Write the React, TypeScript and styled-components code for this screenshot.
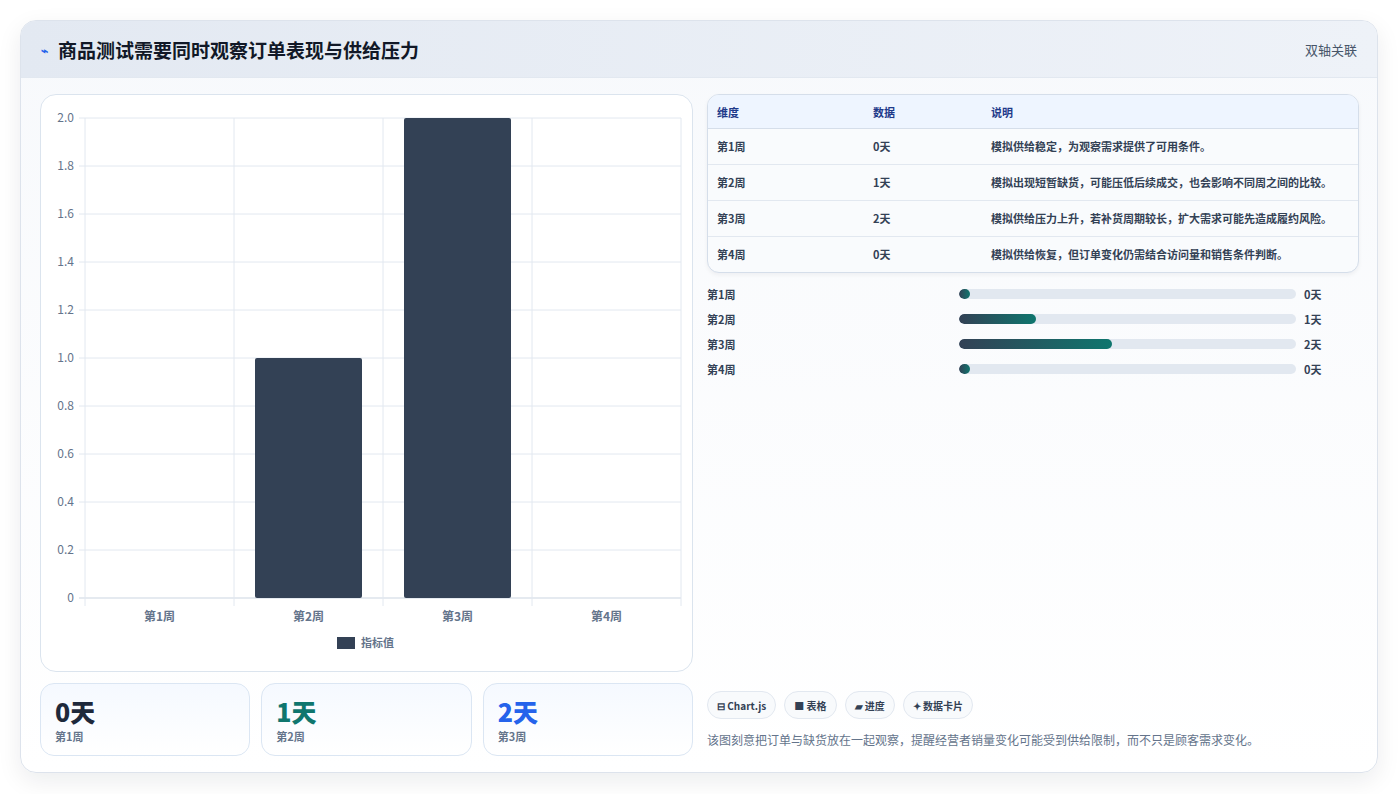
import styled, { createGlobalStyle } from "styled-components";

const GlobalStyle = createGlobalStyle`
  html, body { margin: 0; padding: 0; background: #ffffff; }
  body { font-family: "Noto Sans CJK SC", "Noto Sans", sans-serif; color: #1e293b; }
`;

const weeks = [
  { name: "第1周", value: 0, note: "模拟供给稳定，为观察需求提供了可用条件。" },
  { name: "第2周", value: 1, note: "模拟出现短暂缺货，可能压低后续成交，也会影响不同周之间的比较。" },
  { name: "第3周", value: 2, note: "模拟供给压力上升，若补货周期较长，扩大需求可能先造成履约风险。" },
  { name: "第4周", value: 0, note: "模拟供给恢复，但订单变化仍需结合访问量和销售条件判断。" },
];

const Page = styled.div`
  padding: 20px 21px 21px 20px;
`;

const Card = styled.div`
  height: 753px;
  box-sizing: border-box;
  border: 1px solid #dde3ec;
  border-radius: 16px;
  background: linear-gradient(180deg, #f7f9fc 0%, #ffffff 100%);
  box-shadow: 0 8px 24px rgba(15, 23, 42, 0.08);
  overflow: hidden;
  display: flex;
  flex-direction: column;
`;

const Header = styled.div`
  height: 56px;
  flex: none;
  display: flex;
  align-items: center;
  justify-content: space-between;
  padding: 0 20px;
  background: linear-gradient(90deg, #e3e9f2 0%, #eef2f8 100%);
  border-bottom: 1px solid #e2e8f0;
`;

const Title = styled.h2`
  margin: 0;
  font-size: 19px;
  font-weight: 700;
  color: #111827;
  display: flex;
  align-items: center;
  gap: 10px;
`;

const Mark = styled.span`
  color: #2563eb;
  font-size: 12px;
`;

const Tag = styled.span`
  font-size: 13px;
  color: #475569;
`;

const Body = styled.div`
  flex: 1;
  display: grid;
  grid-template-columns: 653px 1fr;
  gap: 14px;
  padding: 16px 18px 18px 19px;
`;

const Left = styled.div`
  display: flex;
  flex-direction: column;
  gap: 11px;
`;

const ChartBox = styled.div`
  height: 578px;
  box-sizing: border-box;
  border: 1px solid #dbe4ee;
  border-radius: 16px;
  background: #fff;
`;

const Stats = styled.div`
  display: grid;
  grid-template-columns: repeat(3, 1fr);
  gap: 11px;
`;

const Stat = styled.div`
  height: 73px;
  box-sizing: border-box;
  border: 1px solid #dbe6f3;
  border-radius: 14px;
  background: linear-gradient(180deg, #f5f9ff 0%, #ffffff 100%);
  padding: 10px 14px;
`;

const StatValue = styled.div<{ $c: string }>`
  font-size: 25px;
  font-weight: 800;
  line-height: 34px;
  color: ${(p) => p.$c};
`;

const StatLabel = styled.div`
  font-size: 11px;
  font-weight: 700;
  color: #64748b;
`;

const Right = styled.div`
  display: flex;
  flex-direction: column;
`;

const Table = styled.table`
  width: 100%;
  border-collapse: separate;
  border-spacing: 0;
  border: 1px solid #d5deea;
  border-radius: 12px;
  overflow: hidden;
  font-size: 11px;
  font-weight: 700;
  color: #334155;
  background: #f9fbfd;
  box-shadow: 0 2px 4px rgba(15, 23, 42, 0.05);
  th {
    text-align: left;
    background: #eef5ff;
    color: #1e3a8a;
    height: 33px;
    padding: 0 9px;
    border-bottom: 1px solid #d5deea;
  }
  td {
    padding: 9px 9px;
    line-height: 17px;
    vertical-align: top;
    border-bottom: 1px solid #e2e8f0;
  }
  tr:last-child td { border-bottom: none; }
`;

const Bars = styled.div`
  display: flex;
  flex-direction: column;
  gap: 7px;
  margin-top: 12px;
  font-size: 11px;
  font-weight: 700;
  color: #334155;
`;

const BarRow = styled.div`
  display: grid;
  grid-template-columns: 244px 337px 1fr;
  gap: 8px;
  align-items: center;
  height: 18px;
`;

const Track = styled.div`
  height: 10px;
  border-radius: 5px;
  background: #e2e8f0;
  overflow: hidden;
`;

const Fill = styled.div`
  height: 100%;
  min-width: 11px;
  border-radius: 5px;
  background: linear-gradient(90deg, #334155 0%, #0f766e 100%);
`;

const Spacer = styled.div`
  flex: 1;
`;

const Chips = styled.div`
  display: flex;
  gap: 8px;
  margin-bottom: 12px;
`;

const Chip = styled.span`
  height: 28px;
  box-sizing: border-box;
  padding: 0 9px;
  display: flex;
  align-items: center;
  gap: 4px;
  border: 1px solid #e2e8f0;
  border-radius: 14px;
  background: #f8fafc;
  font-size: 10px;
  font-weight: 700;
  color: #334155;
`;

const Caption = styled.p`
  margin: 0 0 8px;
  font-size: 12px;
  color: #64748b;
`;

function Chart() {
  const x0 = 44, x1 = 640, y0 = 23, y1 = 503;
  const ticks = [0, 0.2, 0.4, 0.6, 0.8, 1.0, 1.2, 1.4, 1.6, 1.8, 2.0];
  const cw = (x1 - x0) / 4;
  const y = (v: number) => y1 - (v / 2) * (y1 - y0);
  return (
    <svg width="651" height="576" style={{ display: "block" }} fontFamily='"Noto Sans CJK SC", sans-serif'>
      {ticks.map((t) => (
        <g key={t}>
          <line x1={x0 - 6} x2={x1} y1={y(t)} y2={y(t)} stroke={t === 0 ? "#cbd5e1" : "#e2e8f0"} />
          <text x={x0 - 11} y={y(t) + 4} textAnchor="end" fontSize="12" fill="#64748b">
            {t === 0 ? "0" : t.toFixed(1)}
          </text>
        </g>
      ))}
      {[0, 1, 2, 3, 4].map((i) => (
        <line key={i} x1={x0 + i * cw} x2={x0 + i * cw} y1={y0} y2={y1 + 8} stroke="#e2e8f0" />
      ))}
      {weeks.map((w, i) => (
        <g key={w.name}>
          {w.value > 0 && (
            <rect x={x0 + i * cw + 21} y={y(w.value)} width={107} height={y1 - y(w.value)} fill="#334155" rx="2" />
          )}
          <text x={x0 + i * cw + cw / 2} y={y1 + 23} textAnchor="middle" fontSize="12" fontWeight="700" fill="#64748b">
            {w.name}
          </text>
        </g>
      ))}
      <rect x={296} y={542} width={18} height={12} fill="#334155" />
      <text x={320} y={552} fontSize="11" fontWeight="700" fill="#64748b">指标值</text>
    </svg>
  );
}

export default function App() {
  const colors = ["#1e293b", "#0f766e", "#2563eb"];
  return (
    <Page>
      <GlobalStyle />
      <Card>
        <Header>
          <Title><Mark>⌁</Mark>商品测试需要同时观察订单表现与供给压力</Title>
          <Tag>双轴关联</Tag>
        </Header>
        <Body>
          <Left>
            <ChartBox><Chart /></ChartBox>
            <Stats>
              {weeks.slice(0, 3).map((w, i) => (
                <Stat key={w.name}>
                  <StatValue $c={colors[i]}>{w.value}天</StatValue>
                  <StatLabel>{w.name}</StatLabel>
                </Stat>
              ))}
            </Stats>
          </Left>
          <Right>
            <Table>
              <colgroup>
                <col style={{ width: 156 }} />
                <col style={{ width: 118 }} />
                <col />
              </colgroup>
              <thead>
                <tr><th>维度</th><th>数据</th><th>说明</th></tr>
              </thead>
              <tbody>
                {weeks.map((w) => (
                  <tr key={w.name}>
                    <td>{w.name}</td>
                    <td>{w.value}天</td>
                    <td>{w.note}</td>
                  </tr>
                ))}
              </tbody>
            </Table>
            <Bars>
              {weeks.map((w) => (
                <BarRow key={w.name}>
                  <span>{w.name}</span>
                  <Track><Fill style={{ width: `${(w.value / 4.4) * 100}%` }} /></Track>
                  <span>{w.value}天</span>
                </BarRow>
              ))}
            </Bars>
            <Spacer />
            <Chips>
              <Chip>⊟ Chart.js</Chip>
              <Chip>■ 表格</Chip>
              <Chip>▰ 进度</Chip>
              <Chip>✦ 数据卡片</Chip>
            </Chips>
            <Caption>该图刻意把订单与缺货放在一起观察，提醒经营者销量变化可能受到供给限制，而不只是顾客需求变化。</Caption>
          </Right>
        </Body>
      </Card>
    </Page>
  );
}
